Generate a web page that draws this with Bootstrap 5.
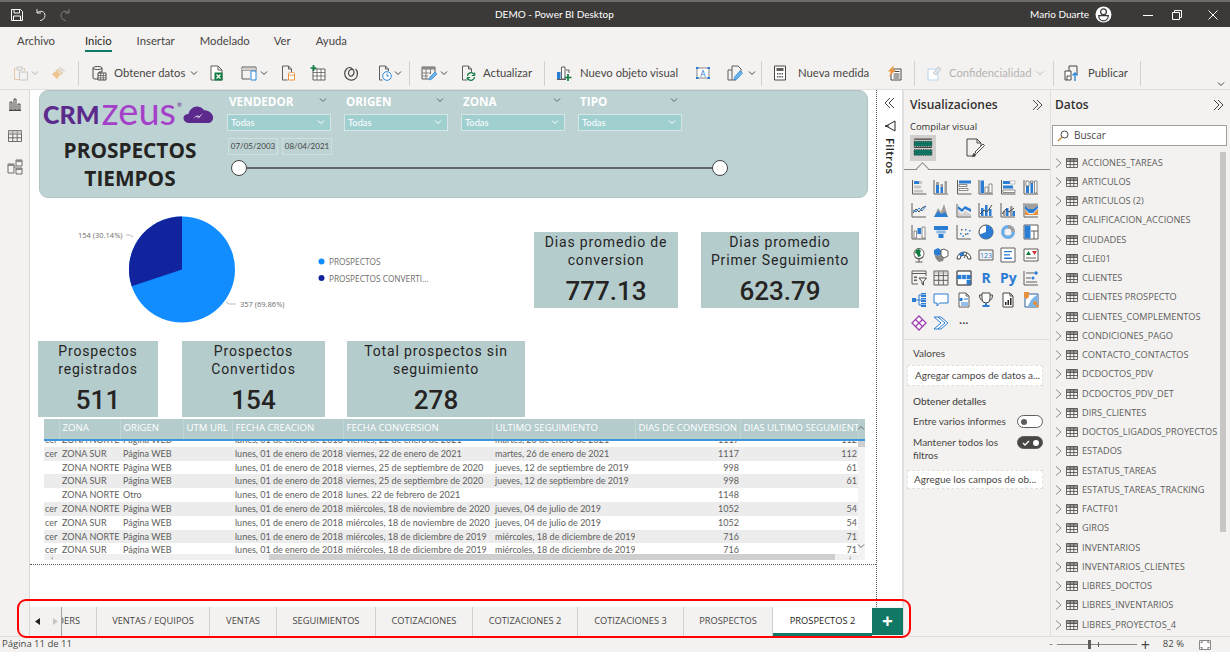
<!DOCTYPE html>
<html lang="es">
<head>
<meta charset="utf-8">
<title>DEMO - Power BI Desktop</title>
<link href="https://cdn.jsdelivr.net/npm/bootstrap@5.3.0/dist/css/bootstrap.min.css" rel="stylesheet">
<style>
:root{--pane:#f3f2f1;--line:#e1dfdd;--tx:#605e5c;--green:#117865;--kpi:#b5cccd;--ui:"Lato","Open Sans",sans-serif;--up:"Open Sans","Noto Sans",sans-serif;}
html,body{height:100%;overflow:hidden;background:#fff;}
body{font-family:var(--ui);background:#fff;color:#323130;font-size:10.5px;width:1230px;height:657px;}
.ic{width:16px;height:16px;flex:none;display:block;}
.ic.s14{width:14px;height:14px;}
.ic.s12{width:12px;height:12px;}
.cv8{width:8px;height:8px;flex:none;display:block;}
/* title bar */
.tbar{height:27px;background:#3b3a39;border-top:2px solid #6d6c6b;color:#fff;font-size:10px;flex:none;}
.tleft{width:495px;padding-left:10px;gap:10px;}
.tbar .spc{flex:1;}
.tava{width:17px;height:17px;flex:none;margin:0 25px 0 6px;}
.wbtn{display:flex;justify-content:center;}
.wmin{width:22px}.wres{width:36px}.wcls{width:35px}
/* ribbon */
.rib{background:var(--pane);flex:none;}
.rtabs{height:31px;padding-left:17px;}
.rtabs .nav-link{color:#484644;font-size:11.3px;padding:0;line-height:24px;height:22px;margin-top:2px;position:relative;}
.rtabs .nav-link.active{color:#252423;}
.rtabs .nav-link.active::after{content:"";position:absolute;left:0;right:0;bottom:-1px;height:2px;background:var(--green);}
.rt2{margin-left:30px;}.rt3{margin-left:25px;}.rt4{margin-left:25px;}.rt5{margin-left:24px;}.rt6{margin-left:25px;}
.tools{height:32px;border-bottom:1px solid var(--line);padding:0 0 1px 13px;font-size:11.3px;color:#484644;}
.tools .vs{width:1px;height:25px;background:#d2d0ce;flex:none;}
.tools .lbl{white-space:nowrap;flex:none;}
.w72{width:72px;}.w49{width:49px;}.w99{width:99px;}.w71{width:71px;}.w83{width:83px;}.w40{width:40px;}
.dis{color:#b5b3b1;}
.sp1{margin-left:1px}.sp2{margin-left:2px}.sp3{margin-left:3px}.sp4{margin-left:4px}.sp5{margin-left:5px}.sp7{margin-left:7px}.sp8{margin-left:8px}.sp9{margin-left:9px}.sp10{margin-left:10px}.sp11{margin-left:11px}.sp12{margin-left:12px}.sp14{margin-left:14px}.sp16{margin-left:16px}.sp17{margin-left:17px}.sp18{margin-left:18px}
.collap{margin-left:auto;margin-right:5px;align-self:flex-end;}
/* main */
.main{height:546px;position:relative;background:var(--pane);flex:none;}
.rail{width:30px;flex:none;gap:15.5px;padding-top:6px;border-right:1px solid #d9d7d5;}
.center{width:873px;flex:none;}
.ctop{height:517px;background:#fff;}
.canvas{width:847px;flex:none;background:#fff;border-right:1px dotted #555;}
.band{margin:0 8px 0 9px;height:108px;background:#bdd2d2;border:1px solid #b0c4c4;border-radius:9px;padding:10px 0 0 3px;gap:9px;flex:none;}
.brand{width:175px;flex:none;}
.logo{height:26px;line-height:26px;white-space:nowrap;}
.logo .crm{font-family:"Lato",sans-serif;font-weight:900;font-size:25px;color:#5b2a8c;}
.logo .zeus{font-family:"Lato",sans-serif;font-weight:400;font-size:38px;color:#a540c8;line-height:24px;margin:-9px 0 0 2px;}
.logo sup{font-size:6px;color:#5b2a8c;top:-1.5em;margin:0 1px;}
.logo svg{flex:none;}
.btit{font-family:var(--up);font-weight:700;font-size:20.8px;line-height:28px;color:#252423;text-align:center;margin-top:9px;width:174px;}
.slic{width:104px;}
.fields{gap:13px;}
.slab{height:19px;padding:0 4px 0 2px;font-family:var(--up);color:#fff;font-weight:700;font-size:11.7px;line-height:13px;justify-content:space-between;margin-top:-6px;}
.slab svg{color:#5a6a6a;margin-top:1px;}
.ssel{height:17px;background:#a0cfd0;border:1px solid #d6e6e6;color:#fff;font-size:9.3px;line-height:14px;padding:1px 5px 0 3px;}
.ssel svg{margin-top:2px;}
.dates{gap:4px;margin:7px 0 0 1px;}
.dbox{width:50px;height:17px;border:1px solid #cfdede;color:#444;font-size:8px;line-height:15px;text-align:center;}
.slider{height:16px;width:500px;margin-top:5px;position:relative;}
.slider .ln{position:absolute;left:10px;right:6px;top:7px;height:2px;background:#666;}
.slider .hd{position:absolute;top:0;width:16px;height:16px;border-radius:50%;background:#fff;border:1.5px solid #444;}
.hd.h1{left:4px}.hd.h2{left:485px}
.r1{height:143px;flex:none;}
.piebox{width:504px;flex:none;display:block;}
.pct{font-size:7.5px;fill:#6f6d6b;font-family:"Open Sans",sans-serif;}
.pleg{font-size:8.3px;fill:#6f6d6b;font-family:"Open Sans",sans-serif;}
.kpi{background:var(--kpi);height:76px;font-family:Roboto,sans-serif;color:#252423;text-align:center;flex:none;}
.kt{font-size:14px;line-height:18px;letter-spacing:.85px;padding-top:1px;}
.kv{font-size:26px;font-weight:500;line-height:34px;margin-top:5px;}
.k144{width:144px}.k158{width:158px;margin-left:23px}.k120{width:120px}.k143{width:143px;margin-left:24px}.k178{width:178px;margin-left:22px}
.ktop{margin-top:34px;}
.r2{padding-left:8px;flex:none;}
.tblw{margin:2px 11px 0 14px;height:145px;position:relative;overflow:hidden;flex:none;}
.ttab{table-layout:fixed;width:814px;margin:0;font-size:9px;white-space:nowrap;}
.ttab th,.ttab td{padding:0 0 0 3px;border:0;overflow:hidden;box-shadow:none;background:transparent;color:var(--tx);}
.ttab th{height:20px;background:var(--kpi);color:#fff;font-family:var(--up);font-weight:400;font-size:9.6px;border-right:1px solid #c2d6d6;vertical-align:top;padding-top:2px;line-height:13px;}
.hrow{border-bottom:2px solid #3b96dd;width:821px;background:var(--kpi);height:22px;overflow:hidden;}
.tbody{height:113px;width:814px;overflow:hidden;}
.tbody .ttab{margin-top:-8px;}
.ttab td{height:13.8px;line-height:13px;}
.ttab td:first-child{padding-left:1px;}
.ttab tr.gy td{background:#ececec;}
.ttab td.ar{text-align:right;padding:0 1px 0 0;}
.c1{width:15px}.c2{width:61px}.c3{width:63px}.c4{width:49px}.c5{width:111px}.c6{width:149px}.c7{width:143px}.c8{width:105px}.c9{width:118px}
.vbar{position:absolute;right:0;top:22px;width:7px;height:119px;background:#f3f3f3;}
.vbar i{display:block;height:6px;background:#cfcfcf;}
.vup,.vdn{position:absolute;right:0;color:#666;}
.vup{top:5px}.vdn{top:123px}
.hbar{height:6px;width:814px;background:#f0f0f0;position:relative;}
.hbar i{position:absolute;left:225px;width:566px;top:0;bottom:0;background:#cfcfcf;}
.hl,.hr{position:absolute;top:0;font-size:8px;line-height:6px;color:#555;}
.hl{left:7px}.hr{left:805px}
.cbot{height:1px;border-bottom:1px dotted #555;flex:none;}
/* filter rail */
.filt{width:26px;flex:none;background:#fff;gap:8px;padding-top:7px;border-right:1px solid var(--line);}
.filt .fun{margin-top:3px;}
.filt .vt{writing-mode:vertical-rl;font-family:var(--up);font-weight:600;font-size:11.4px;color:#252423;line-height:12px;letter-spacing:.3px;margin-top:-2px;}
/* tabs */
.ptabs{height:29px;flex:none;background:var(--pane);flex-wrap:nowrap;font-family:var(--up);font-size:9.3px;color:#484644;}
.ptabs .nav-link{color:#484644;padding:0;height:29px;line-height:28px;text-align:center;border-right:1px solid #d2d0ce;white-space:nowrap;border-radius:0;}
.ptabs .nav-link.active{background:#fff;color:#252423;border-right:0;border-bottom:3px solid var(--green);font-weight:500;}
.pnav{width:32px;flex:none;border-right:1px solid #a19f9d;padding-left:5px;gap:13px;}
.t35{width:35px;}
.ptabs .nav-link.clipd{display:flex;justify-content:flex-end;overflow:hidden;padding-right:16px;}
.t113{width:113px}.t67{width:67px}.t99{width:99px}.t97{width:97px}.t105{width:105px}.t106{width:106px}.t89{width:89px}
.padd{width:31px;background:var(--green);color:#fff;font-size:19px;font-weight:700;line-height:27px;text-align:center;height:27px;margin-top:1px;}
.redbox{position:absolute;left:17px;top:509px;width:894px;height:39px;border:2.5px solid #f00;border-radius:9px;pointer-events:none;}
/* viz pane */
.viz{width:147px;flex:none;border-left:1px solid var(--line);padding:6px 0 0 0;}
.phead{font-family:var(--up);font-size:12px;font-weight:600;color:#323130;line-height:17px;}
.vh{padding:0 7px 0 6px;justify-content:space-between;}
.vsub{font-family:var(--up);font-size:9.4px;font-weight:500;padding:7px 0 0 6px;line-height:14px;color:#323130;}
.vbtns{padding-left:6px;margin-top:1px;height:26px;}
.vsel{width:26px;height:26px;background:#d2d0ce;display:flex;align-items:center;justify-content:center;}
.vsel svg{width:20px;height:20px;}
.vtab2{margin-left:28px;display:flex;align-items:center;}
.notch{height:9px;border-bottom:1px solid #8a8886;position:relative;}
.notch::after{content:"";position:absolute;left:14px;bottom:-4px;width:9px;height:9px;background:var(--pane);border-left:1px solid #8a8886;border-top:1px solid #8a8886;transform:rotate(45deg);}
.vgrid{display:grid;grid-template-columns:repeat(6,22.3px);grid-auto-rows:22.6px;padding:6px 0 0 4px;justify-items:center;align-items:center;}
.vgrid .rr{font-weight:700;font-size:14px;line-height:16px;color:#2b7cd3;font-family:"Open Sans",sans-serif;}
.vgrid .dots{font-size:12px;line-height:8px;color:#444;}
.vsec{border-top:1px solid var(--line);margin-top:5px;padding-top:6px;font-size:10px;color:#484644;}
.vlab{padding-left:9px;line-height:14px;}
.vbox{margin:5px 7px 0 3px;height:21px;background:#fff;border:1px dashed #e1dfdd;padding-left:7px;line-height:19px;color:#484644;white-space:nowrap;overflow:hidden;}
.vlab.mt8{margin-top:8px;font-weight:500;}
.trow{padding:7px 7px 0 9px;justify-content:space-between;line-height:13px;}
.trow.t2{padding-top:8px;}
.trow .wr{width:92px;}
.togl{width:26px;height:13px;border:1px solid #605e5c;border-radius:7px;background:#fff;position:relative;flex:none;}
.togl::after{content:"";position:absolute;left:3px;top:2.5px;width:6px;height:6px;border-radius:50%;background:#605e5c;}
.togl.on{background:#484644;}
.togl.on::after{left:auto;right:3px;background:#fff;}
.togl svg{position:absolute;left:4px;top:1.500px;}
.vbox.b2{height:19px;line-height:17px;margin-top:8px;padding-left:6px;}
/* data pane */
.data{width:180px;flex:none;border-left:1px solid var(--line);padding:6px 0 0 0;position:relative;}
.dh{padding:0 6px 0 4px;justify-content:space-between;}
.dsearch{margin:12px 3px 0 1px;height:21px;background:#fff;border:1px solid #a19f9d;padding:0 4px;gap:5px;font-family:var(--up);font-size:10px;color:#484644;}
.dlist{margin-top:7px;}
.dlist .list-group-item{background:transparent;border:0;padding:0 0 0 4px;height:19.25px;color:var(--tx);font-family:var(--up);font-size:9.2px;display:flex;align-items:center;gap:4px;white-space:nowrap;}
.dlist svg{flex:none;}
.dscroll{position:absolute;right:4px;top:62px;width:6px;height:380px;background:#c8c6c4;}
/* status */
.stat{height:16px;border-top:1px solid var(--line);background:var(--pane);font-family:var(--up);font-size:9.5px;color:#484644;padding:0 0 0 2px;flex:none;}
.zoomz{margin-left:auto;padding-right:18px;}
.ztrack{width:80px;height:1px;background:#8a8886;position:relative;margin:0 4px;}
.ztrack::before{content:"";position:absolute;left:31px;top:-4px;width:3px;height:9px;background:#605e5c;}
.ztrack::after{content:"";position:absolute;left:41px;top:-2px;width:1px;height:5px;background:#605e5c;}
.zpct{margin:0 14px 0 13px;}
</style>
</head>
<body class="d-flex flex-column">
<svg width="0" height="0" class="position-absolute">
<defs>
<symbol id="chev" viewBox="0 0 8 8"><path d="M1 2.500l3 3 3-3" fill="none" stroke="currentColor" stroke-width="1"/></symbol>
<symbol id="chevu" viewBox="0 0 8 8"><path d="M1 5.500l3-3 3 3" fill="none" stroke="currentColor" stroke-width="1"/></symbol>
<symbol id="clip" viewBox="0 0 16 16"><path d="M3 3.500H1.500v11H6M10 3.500h1.500V6" fill="none" stroke="#e8c9a8"/><path d="M4 2h5v3H4z" fill="none" stroke="#c8c6c4"/><path d="M6.500 7h8v8h-8z" fill="none" stroke="#c8c6c4"/></symbol>
<symbol id="paint" viewBox="0 0 16 16"><path d="M9 2l5 4-1 1-5-4z" fill="#d2d0ce"/><path d="M7.500 4l4 4-2.500 2L5 6z" fill="#f2d8b8" stroke="#d2b48c" stroke-width=".7"/><path d="M5 6l4 4-3 4-5-5z" fill="#f0c48c"/></symbol>
<symbol id="db" viewBox="0 0 16 16"><path d="M2 3c0-2 9-2 9 0v4H8v7H4c-2 0-2-1-2-1z" fill="none" stroke="#484644"/><path d="M2 3c0 2 9 2 9 0" fill="none" stroke="#484644"/><path d="M7 8h8v7H7z" fill="#fff" stroke="#484644"/><path d="M7 10.500h8M7 12.800h8M9.700 8v7M12.300 8v7" stroke="#484644" stroke-width=".7"/></symbol>
<symbol id="xl" viewBox="0 0 16 16"><path d="M2 1h7l4 4v10H2z" fill="#fff" stroke="#605e5c"/><path d="M9 1v4h4" fill="none" stroke="#605e5c"/><path d="M5.500 7.500h8v8h-8z" fill="#107c41"/><path d="M7.500 9.500l4 4M11.500 9.500l-4 4" stroke="#fff" stroke-width="1.200"/></symbol>
<symbol id="tb" viewBox="0 0 16 16"><path d="M1 2h14v4M1 2v12h8" fill="none" stroke="#605e5c"/><path d="M1 5h14" stroke="#605e5c"/><path d="M1 3h14v2H1z" fill="#d2d0ce"/><path d="M10 6h5v9h-5z" fill="#fff" stroke="#2b88d8"/></symbol>
<symbol id="paper" viewBox="0 0 16 16"><path d="M2.500 1h6l3 3v3M2.500 1v14h5" fill="none" stroke="#605e5c"/><path d="M8.500 1v3h3" fill="none" stroke="#605e5c"/><path d="M8.500 8.500c0-1.600 6-1.600 6 0V15h-6z" fill="#fff" stroke="#e8903a"/><path d="M8.500 9.500c0 1 6 1 6 0" fill="none" stroke="#e8903a"/></symbol>
<symbol id="tplus" viewBox="0 0 16 16"><path d="M3 4h12v11H3z" fill="#fff" stroke="#605e5c"/><path d="M3 7.500h12M3 11h12M7 4v11M11 4v11" stroke="#605e5c" stroke-width=".8"/><path d="M3.500 0v6M.5 3h6" stroke="#107c41" stroke-width="1.700"/></symbol>
<symbol id="at" viewBox="0 0 16 16"><path d="M10.500 5c-2-1.500-5 0-5 3s2.500 4 4 2.500 2-4 .5-6S6 1.500 3.500 4 1 11 4 13.500s7 2 9-.5 2-7-.5-9" fill="none" stroke="#484644" stroke-width="1.200"/></symbol>
<symbol id="clock" viewBox="0 0 16 16"><path d="M2.500 1h6l3 3v2M2.500 1v14h3" fill="none" stroke="#605e5c"/><path d="M8.500 1v3h3" fill="none" stroke="#605e5c"/><circle cx="10" cy="11" r="4.300" fill="#fff" stroke="#2b88d8"/><path d="M10 8.500V11h2" fill="none" stroke="#2b88d8"/></symbol>
<symbol id="gridp" viewBox="0 0 16 16"><path d="M1 2h13v6M1 2v12h7" fill="none" stroke="#605e5c"/><path d="M1 2h13v2.500H1z" fill="#8a8886"/><path d="M1 8h9M1 11h6M5 4v10M9.500 4v5" stroke="#605e5c" stroke-width=".7"/><path d="M8 15l1-3 5-5 2 2-5 5z" fill="#6db3e8" stroke="#2b88d8" stroke-width=".7"/></symbol>
<symbol id="docr" viewBox="0 0 16 16"><path d="M2.500 1h6l3 3v3M2.500 1v14h4" fill="none" stroke="#605e5c"/><path d="M8.500 1v3h3" fill="none" stroke="#605e5c"/><path d="M7.500 11a3.500 3.500 0 016-2.200l1 1M14.500 12a3.500 3.500 0 01-6 2.200l-1-1" fill="none" stroke="#107c41" stroke-width="1.300"/><path d="M14.800 7.500v3h-3M7.200 15.500v-3h3" fill="none" stroke="#107c41" stroke-width="1"/></symbol>
<symbol id="newv" viewBox="0 0 16 16"><path d="M1 7h3.500v7H1z" fill="#2b7cd3"/><path d="M5.500 2H9v12H5.500z" fill="#fff" stroke="#605e5c"/><path d="M1 14.500h9" stroke="#605e5c"/><path d="M10 5h3v3" fill="none" stroke="#605e5c"/><path d="M12 9v7M8.500 12.500h7" stroke="#107c41" stroke-width="1.700"/></symbol>
<symbol id="tbox" viewBox="0 0 16 16"><path d="M2 3h12v10H2z" fill="#fff" stroke="#8a8886"/><path d="M1 2h2.500v2H1zM12.500 2H15v2h-2.500zM1 12h2.500v2H1zM12.500 12H15v2h-2.500z" fill="#2b7cd3"/><text x="8" y="11.500" font-size="8.500" text-anchor="middle" fill="#2b7cd3" font-family="Open Sans,sans-serif">A</text></symbol>
<symbol id="docp" viewBox="0 0 16 16"><path d="M5 5V1h6l3 3v4M5 5H1v10h8" fill="none" stroke="#605e5c"/><path d="M5 5v10" stroke="#605e5c"/><path d="M7 15l1-3.500 5-5.500 2.500 2L10 14z" fill="#6db3e8" stroke="#2b88d8" stroke-width=".8"/></symbol>
<symbol id="calc" viewBox="0 0 16 16"><path d="M2.500 1h11v14h-11z" fill="#fff" stroke="#484644"/><path d="M4.500 3h7v3h-7z" fill="#605e5c"/><path d="M5 8h1.500v1.500H5zM7.300 8h1.500v1.500H7.300zM9.600 8h1.500v1.500H9.600zM5 11h1.500v1.500H5zM7.300 11h1.500v1.500H7.300zM9.600 11h1.500v1.500H9.600z" fill="#605e5c"/></symbol>
<symbol id="bolt" viewBox="0 0 16 16"><path d="M7 4h8v11H5V9" fill="#fff" stroke="#484644"/><path d="M8.500 6.500h5M7.500 9h6M7.500 11h6M7.500 13h6" stroke="#484644" stroke-width="1"/><path d="M8 0L2 6.500h3L3 12l7-7.500H6.500z" fill="#e8903a"/></symbol>
<symbol id="conf" viewBox="0 0 16 16"><path d="M2 4h7l3 3v8H2z" fill="#fff" stroke="#b7d5ee"/><path d="M7 8l5-6 3 2-5 6z" fill="#dce6ee" stroke="#b7b5b3" stroke-width=".6"/></symbol>
<symbol id="pub" viewBox="0 0 16 16"><path d="M5 6V1h8v9" fill="none" stroke="#484644"/><path d="M1 6h6v9H1z" fill="#fff" stroke="#484644"/><path d="M3 15v-4h3" fill="none" stroke="#484644"/><path d="M11 16V8M8.500 10.500L11 8l2.500 2.500" fill="none" stroke="#2b88d8" stroke-width="1.400"/></symbol>
<symbol id="rep" viewBox="0 0 16 16"><path d="M3 6h2v8H3zM7 3h2v11H7zM11 8h2v6h-2z" fill="none" stroke="#484644"/><path d="M2 14.500h12" stroke="#484644"/></symbol>
<symbol id="gridi" viewBox="0 0 16 16"><path d="M1.500 2.500h13v11h-13zM1.500 6h13M1.500 9.800h13M5.800 2.500v11M10.200 2.500v11" fill="none" stroke="#605e5c" stroke-width=".9"/><path d="M1.500 2.500h13V6h-13z" fill="#b5b3b1" fill-opacity=".6"/></symbol>
<symbol id="model" viewBox="0 0 16 16"><path d="M1 5h6v9H1zM9 1h6v6H9zM9 9h6v6H9zM7 8h2" fill="none" stroke="#605e5c" stroke-width=".9"/><path d="M1 5h6v2H1zM9 1h6v2H9zM9 9h6v2H9z" fill="#8a8886"/></symbol>
<symbol id="v1" viewBox="0 0 16 16"><path d="M1.500 1v14h14" fill="none" stroke="#605e5c"/><path d="M3 2h5v3H3z" fill="#2b7cd3"/><path d="M8 2h3v3H8zM3 6.500h7v3H3zM3 11h9v2.500H3z" fill="#c8c6c4"/></symbol>
<symbol id="v2" viewBox="0 0 16 16"><path d="M1 1v14h14" fill="none" stroke="#605e5c"/><path d="M3 6h3v8H3zM7.500 8H10v6H7.500z" fill="#2b7cd3"/><path d="M3 3h3v3H3zM7.500 5H10v3H7.500zM11.500 2H14v12h-2.500z" fill="#a19f9d"/></symbol>
<symbol id="v3" viewBox="0 0 16 16"><path d="M1.500 1v14h14" fill="none" stroke="#605e5c"/><path d="M3 1.500h12v3H3z" fill="#2b7cd3"/><path d="M3 5.500h8v2H3zM3 9.500h9v2H3z" fill="#fff" stroke="#605e5c" stroke-width=".7"/></symbol>
<symbol id="v4" viewBox="0 0 16 16"><path d="M1 1v14h14" fill="none" stroke="#605e5c"/><path d="M2.500 1.500h3.500V14H2.500z" fill="#2b7cd3"/><path d="M7 8h3v6H7zM11 5h3v9h-3z" fill="#fff" stroke="#605e5c" stroke-width=".7"/></symbol>
<symbol id="v5" viewBox="0 0 16 16"><path d="M1.500 1v14h14" fill="none" stroke="#605e5c"/><path d="M3 2h7v3H3z" fill="#2b7cd3"/><path d="M10 2h5v3h-5z" fill="#fff" stroke="#a19f9d" stroke-width=".6"/><path d="M3 6.500h10v3H3z" fill="#2b7cd3"/><path d="M3 11h12v2.500H3z" fill="#fff" stroke="#605e5c" stroke-width=".7"/></symbol>
<symbol id="v6" viewBox="0 0 16 16"><path d="M1 1v14h14" fill="none" stroke="#605e5c"/><path d="M3 7h3v7H3zM7.500 4H10v10H7.500z" fill="#2b7cd3"/><path d="M3 2h3v5H3zM7.500 2H10v2H7.500zM11.500 2H14v12h-2.500z" fill="#fff" stroke="#605e5c" stroke-width=".7"/></symbol>
<symbol id="v7" viewBox="0 0 16 16"><path d="M1 1v14h14" fill="none" stroke="#605e5c"/><path d="M2 11l3-4 3 3 3-4 4-2" fill="none" stroke="#484644"/><path d="M2 8l3 2 3-4 3 3 4-5" fill="none" stroke="#2b7cd3"/></symbol>
<symbol id="v8" viewBox="0 0 16 16"><path d="M1 15L5 6l3 4 3-8 4 13z" fill="#a19f9d"/><path d="M1 15l4-6 3 3 4-2 3 5z" fill="#2b7cd3"/></symbol>
<symbol id="v9" viewBox="0 0 16 16"><path d="M1 2v13h14" fill="none" stroke="#605e5c"/><path d="M2 4l4 3 3-3 6 3v3l-6-3-3 3-4-3z" fill="#2b7cd3"/><path d="M2 9l4 3 3-3 6 3v2H2z" fill="#d2d0ce"/></symbol>
<symbol id="v10" viewBox="0 0 16 16"><path d="M1 1v14h14" fill="none" stroke="#605e5c"/><path d="M3 6h2.500v8H3zM7 3h2.500v11H7zM11 7h2.500v7H11z" fill="#2b7cd3"/><path d="M2 12l4-4 3 2 5-7" fill="none" stroke="#484644"/></symbol>
<symbol id="v11" viewBox="0 0 16 16"><path d="M1 1v14h14" fill="none" stroke="#605e5c"/><path d="M3 9h2.500v5H3zM10 4h2.500v10H10z" fill="#a19f9d"/><path d="M6 6h2.500v8H6zM12.500 9H15v5h-2.500z" fill="#2b7cd3"/><path d="M2 12l4-5 3 3 5-4" fill="none" stroke="#484644"/></symbol>
<symbol id="v12" viewBox="0 0 16 16"><path d="M1 1v14h14" fill="none" stroke="#605e5c"/><path d="M2 3l4 4h4l5-4v3l-5 5H6L2 7z" fill="#2b7cd3"/><path d="M2 8l4 4h4l5-5v6H2z" fill="#e8903a"/><path d="M2 1.500h13V4L10 7H6L2 4z" fill="#a19f9d"/></symbol>
<symbol id="v13" viewBox="0 0 16 16"><path d="M1 1v14h14" fill="none" stroke="#605e5c"/><path d="M3 7h2.500v7H3z" fill="#fff" stroke="#605e5c" stroke-width=".7"/><path d="M6.500 4H10v6H6.500z" fill="#2b7cd3"/><path d="M11 3h3v11h-3z" fill="#fff" stroke="#605e5c" stroke-width=".7"/></symbol>
<symbol id="v14" viewBox="0 0 16 16"><path d="M1 2h14v4H1z" fill="#2b7cd3"/><path d="M3.500 6.500h9v3h-9z" fill="#8ab8e0"/><path d="M5.500 10h5v4h-5z" fill="#2b7cd3"/></symbol>
<symbol id="v15" viewBox="0 0 16 16"><path d="M1 1v14h14" fill="none" stroke="#605e5c"/><path d="M4 9h1.500v1.500H4zM6.500 11.500H8V13H6.500zM9 5h1.500v1.500H9zM11 9h1.500v1.500H11zM13 6h1.500v1.500H13z" fill="#2b7cd3"/><path d="M5 5h1.500v1.500H5zM9 9.500h1.500V11H9z" fill="#605e5c"/></symbol>
<symbol id="v16" viewBox="0 0 16 16"><circle cx="8" cy="8" r="7" fill="#fff" stroke="#484644"/><path d="M8 1a7 7 0 11-6.500 9.500L8 8z" fill="#2b7cd3"/></symbol>
<symbol id="v17" viewBox="0 0 16 16"><circle cx="8" cy="8" r="5.300" fill="none" stroke="#6daee6" stroke-width="3.400"/><path d="M8 2.700A5.300 5.300 0 0113.300 8" fill="none" stroke="#a19f9d" stroke-width="3.400"/></symbol>
<symbol id="v18" viewBox="0 0 16 16"><path d="M1 1h14v14H1z" fill="#fff" stroke="#605e5c"/><path d="M1.500 1.500h6v13h-6z" fill="#2b7cd3"/><path d="M8 7h7M11 7v8" stroke="#605e5c"/></symbol>
<symbol id="v19" viewBox="0 0 16 16"><circle cx="8" cy="6.500" r="5" fill="#fff" stroke="#605e5c"/><path d="M5 3l3-1 2 2-1 2 1 3-3 1-1-3-2-1z" fill="#107c41"/><path d="M12.500 10a6 6 0 01-9 0M8 12v3M4.500 15h7" fill="none" stroke="#605e5c"/></symbol>
<symbol id="v20" viewBox="0 0 16 16"><path d="M1 3l4-2 3 2v5l-4 1-3-2z" fill="#2b7cd3"/><path d="M8 3l3-1 4 2v5l-4 2-3-3z" fill="#fff" stroke="#605e5c"/><path d="M1 7l3 2 4-1 3 3-1 3-4 1-3-3z" fill="#8a8886"/></symbol>
<symbol id="v21" viewBox="0 0 16 16"><path d="M1 12a7 7 0 0114 0h-3a4 4 0 00-8 0z" fill="#fff" stroke="#484644"/><path d="M3 7.500A7 7 0 018 5v3a4 4 0 00-3.200 1.700z" fill="#2b7cd3"/><path d="M8 11l3-5" stroke="#484644"/></symbol>
<symbol id="v22" viewBox="0 0 16 16"><path d="M1 3h14v10H1z" fill="#f3f2f1" stroke="#605e5c"/><text x="8" y="10.700" font-size="7" text-anchor="middle" fill="#2b7cd3" font-family="Open Sans,sans-serif">123</text></symbol>
<symbol id="v23" viewBox="0 0 16 16"><path d="M1 1h14v14H1z" fill="#fff" stroke="#605e5c"/><path d="M4 4h8v1.300H4zM4 7.300h6v1.300H4zM4 10.600h8v1.300H4z" fill="#2b7cd3"/></symbol>
<symbol id="v24" viewBox="0 0 16 16"><path d="M1 2h14v12H1z" fill="#fff" stroke="#605e5c"/><path d="M3 8l2.500-4L8 8z" fill="#107c41"/><path d="M9 4h5l-2.500 4z" fill="#d13438"/><path d="M3 10.500h10v1H3z" fill="#605e5c"/></symbol>
<symbol id="v25" viewBox="0 0 16 16"><path d="M1 1h14v5M1 1v13h6" fill="none" stroke="#605e5c"/><path d="M1 3.500h14" stroke="#605e5c"/><path d="M3 6.500h3v1.500H3zM3 9.500h3V11H3z" fill="#605e5c"/><path d="M8 8h7.500l-3 3.500V15l-1.500-1v-2.500z" fill="#fff" stroke="#484644"/></symbol>
<symbol id="v26" viewBox="0 0 16 16"><path d="M1 1h14v14H1zM1 5.600h14M1 10.300h14M5.700 1v14M10.300 1v14" fill="none" stroke="#605e5c"/><path d="M1 1h14v3H1z" fill="#a19f9d" fill-opacity=".4"/></symbol>
<symbol id="v27" viewBox="0 0 16 16"><path d="M1 1h14v14H1z" fill="#fff" stroke="#605e5c"/><path d="M1 4.500h14V15H10V9.500H1z" fill="#2b7cd3"/><path d="M1 9.500h14M5.700 1v14M10.300 1v14M1 4.500h14" fill="none" stroke="#fff" stroke-width=".7"/><path d="M1 1h14v14H1z" fill="none" stroke="#605e5c"/></symbol>
<symbol id="v30" viewBox="0 0 16 16"><path d="M1 1v14h14" fill="none" stroke="#605e5c"/><path d="M3 3h8M3 8h5M3 12h11" stroke="#605e5c"/><circle cx="13" cy="3" r="1.800" fill="#2b7cd3"/><circle cx="10" cy="8" r="1.500" fill="#2b7cd3"/></symbol>
<symbol id="v31" viewBox="0 0 16 16"><path d="M1 6h4v4H1z" fill="#2b7cd3"/><path d="M5 8h3M8 3v10M8 3h2M8 8h2M8 13h2" fill="none" stroke="#2b7cd3"/><path d="M10 1h5v4h-5zM10 6h5v4h-5zM10 11h5v4h-5z" fill="#2b7cd3"/><path d="M10 2.500h5M10 7.500h5M10 12.500h5" stroke="#fff" stroke-width=".5"/></symbol>
<symbol id="v32" viewBox="0 0 16 16"><path d="M1 2h14v9H6.500L4 14v-3H1z" fill="#fff" stroke="#2b7cd3"/></symbol>
<symbol id="v33" viewBox="0 0 16 16"><path d="M3 1h7l3 3v11H3z" fill="#fff" stroke="#605e5c"/><path d="M10 1v3h3" fill="none" stroke="#605e5c"/><circle cx="5" cy="7.500" r="1.800" fill="#2b7cd3"/><path d="M8 7h4M5 11h7M5 13h7" stroke="#2b7cd3"/></symbol>
<symbol id="v34" viewBox="0 0 16 16"><path d="M4 1h8v6a4 4 0 01-8 0z" fill="#fff" stroke="#484644"/><path d="M4 3H1.500c0 3 1 5 3 5.500M12 3h2.500c0 3-1 5-3 5.500" fill="none" stroke="#484644"/><path d="M7 11h2v2H7z" fill="#2b7cd3"/><path d="M4.500 13h7v2h-7z" fill="#2b7cd3"/></symbol>
<symbol id="v35" viewBox="0 0 16 16"><path d="M3 1h7l3 3v11H3z" fill="#fff" stroke="#484644"/><path d="M10 1v3h3" fill="none" stroke="#484644"/><path d="M5 10h1.500v3H5zM7.500 8H9v5H7.500zM10 6h1.500v7H10z" fill="#252423"/></symbol>
<symbol id="v36" viewBox="0 0 16 16"><path d="M2 2h13v13H2z" fill="#fff" stroke="#2b5f9e"/><path d="M5 14l3-6 3-3 3-2v11z" fill="#78b5e8"/><path d="M1 0h5v5L3.500 7 1 5z" fill="#e8903a"/><circle cx="12" cy="11" r="2" fill="#e8903a"/><circle cx="14.500" cy="14" r="1.400" fill="#e8903a"/></symbol>
<symbol id="v37" viewBox="0 0 16 16"><path d="M8 1l7 7-7 7-7-7z" fill="#fff" stroke="#9c3fb0" stroke-width="1.300"/><path d="M4.500 4.500l7 7M11.500 4.500l-7 7" stroke="#9c3fb0" stroke-width="1.300"/></symbol>
<symbol id="v38" viewBox="0 0 16 16"><path d="M1 2h7l7 6-7 6H1l7-6z" fill="#fff" stroke="#2b7cd3"/><path d="M5 2l7 6-7 6" fill="none" stroke="#2b7cd3"/></symbol>
<symbol id="brush" viewBox="0 0 22 22"><path d="M3 2h10l4 4v3M3 2v17h8" fill="none" stroke="#484644"/><path d="M13 2v4h4" fill="none" stroke="#484644"/><path d="M11 15l8-8 1.500 1.500-8 8z" fill="#fff" stroke="#484644"/><path d="M8 20c3 0 4-1 4-3l-2-1c-2 1-1 3-2 4z" fill="#484644"/></symbol>
<symbol id="dbl" viewBox="0 0 12 12"><path d="M2 1l5 5-5 5M6 1l5 5-5 5" fill="none" stroke="#484644" stroke-width="1"/></symbol>
<symbol id="dbll" viewBox="0 0 12 12"><path d="M10 1L5 6l5 5M6 1L1 6l5 5" fill="none" stroke="#484644" stroke-width="1"/></symbol>
<symbol id="right" viewBox="0 0 7 12"><path d="M1 1.500L6 6l-5 4.500" fill="none" stroke="#8a8886"/></symbol>
<symbol id="tabi" viewBox="0 0 12 10"><path d="M.5.500h11v9H.5zM.5 3.500h11M.5 6.500h11M4.200.5v9M7.800.5v9" fill="none" stroke="#484644" stroke-width=".8"/><path d="M.5.500h11v3H.5z" fill="#484644" fill-opacity=".55"/></symbol>
</defs>
</svg>

<header class="tbar d-flex align-items-center">
  <div class="tleft d-flex align-items-center">
    <svg class="ic s14" viewBox="0 0 14 14"><path d="M1.500 1.500h9l2 2v9h-11zM4 1.500V5h5.500V1.500M3.500 12.500V8h7v4.500" fill="none" stroke="#fff"/></svg>
    <svg class="ic s14" viewBox="0 0 14 14"><path d="M3 1v4h4M3 5c3-3 8-2 8 2.500 0 3-2.500 5-5 5" fill="none" stroke="#e8e8e8"/></svg>
    <svg class="ic s14" viewBox="0 0 14 14"><path d="M11 1v4H7M11 5C8 2 3 3 3 7.500c0 3 2.500 5 5 5" fill="none" stroke="#7f7e7d"/></svg>
  </div>
  <div>DEMO - Power BI Desktop</div>
  <div class="spc"></div>
  <div>Mario Duarte</div>
  <svg class="tava" viewBox="0 0 16 16"><circle cx="8" cy="8" r="7.500" fill="#fff"/><circle cx="8" cy="5.500" r="2.700" fill="none" stroke="#3b3a39" stroke-width="1.200"/><path d="M3.500 9h9c0 3.500-2.500 5-4.500 5s-4.500-1.500-4.500-5z" fill="none" stroke="#3b3a39" stroke-width="1.200"/></svg>
  <div class="wbtn wmin"><svg class="ic s12" viewBox="0 0 12 12"><path d="M1 6.500h10" stroke="#fff"/></svg></div>
  <div class="wbtn wres"><svg class="ic s12" viewBox="0 0 12 12"><path d="M1.500 3.500h7v7h-7zM3.500 3.500v-2h7v7h-2" fill="none" stroke="#fff"/></svg></div>
  <div class="wbtn wcls"><svg class="ic s12" viewBox="0 0 12 12"><path d="M1.500 1.500l9 9M10.500 1.500l-9 9" stroke="#fff"/></svg></div>
</header>

<div class="rib">
<ul class="nav rtabs">
  <li class="nav-item"><a class="nav-link" href="#">Archivo</a></li>
  <li class="nav-item rt2"><a class="nav-link active" href="#">Inicio</a></li>
  <li class="nav-item rt3"><a class="nav-link" href="#">Insertar</a></li>
  <li class="nav-item rt4"><a class="nav-link" href="#">Modelado</a></li>
  <li class="nav-item rt5"><a class="nav-link" href="#">Ver</a></li>
  <li class="nav-item rt6"><a class="nav-link" href="#">Ayuda</a></li>
</ul>
<div class="tools d-flex align-items-center">
  <svg class="ic"><use href="#clip"/></svg>
  <svg class="cv8 sp2 dis"><use href="#chev"/></svg>
  <svg class="ic sp12"><use href="#paint"/></svg>
  <span class="vs sp11"></span>
  <svg class="ic sp12"><use href="#db"/></svg>
  <span class="lbl w72 sp7">Obtener datos</span>
  <svg class="cv8 sp4"><use href="#chev"/></svg>
  <svg class="ic sp11"><use href="#xl"/></svg>
  <svg class="ic sp16"><use href="#tb"/></svg>
  <svg class="cv8 sp3"><use href="#chev"/></svg>
  <svg class="ic sp12"><use href="#paper"/></svg>
  <svg class="ic sp14"><use href="#tplus"/></svg>
  <svg class="ic sp17"><use href="#at"/></svg>
  <svg class="ic sp18"><use href="#clock"/></svg>
  <svg class="cv8 sp1"><use href="#chev"/></svg>
  <span class="vs sp7"></span>
  <svg class="ic sp11"><use href="#gridp"/></svg>
  <svg class="cv8 sp3"><use href="#chev"/></svg>
  <svg class="ic sp12"><use href="#docr"/></svg>
  <span class="lbl w49 sp7">Actualizar</span>
  <span class="vs sp12"></span>
  <svg class="ic sp11"><use href="#newv"/></svg>
  <span class="lbl w99 sp8">Nuevo objeto visual</span>
  <svg class="ic sp16"><use href="#tbox"/></svg>
  <svg class="ic sp16"><use href="#docp"/></svg>
  <svg class="cv8 sp5"><use href="#chev"/></svg>
  <span class="vs sp5"></span>
  <svg class="ic sp10"><use href="#calc"/></svg>
  <span class="lbl w71 sp10">Nueva medida</span>
  <svg class="ic sp17"><use href="#bolt"/></svg>
  <span class="vs sp12"></span>
  <svg class="ic sp11"><use href="#conf"/></svg>
  <span class="lbl w83 sp7 dis">Confidencialidad</span>
  <svg class="cv8 sp4 dis"><use href="#chev"/></svg>
  <span class="vs sp9"></span>
  <svg class="ic sp10"><use href="#pub"/></svg>
  <span class="lbl w40 sp8">Publicar</span>
  <span class="vs sp12"></span>
  <svg class="cv8 collap"><use href="#chev"/></svg>
</div>
</div>

<div class="main d-flex">
  <nav class="rail d-flex flex-column align-items-center">
    <svg class="ic"><use href="#rep"/></svg>
    <svg class="ic"><use href="#gridi"/></svg>
    <svg class="ic"><use href="#model"/></svg>
  </nav>

  <div class="center d-flex flex-column">
    <div class="ctop d-flex">
      <section class="canvas d-flex flex-column">
        <div class="band d-flex">
          <div class="brand">
            <div class="logo d-flex align-items-center">
              <span class="crm">CRM</span><span class="zeus">zeus</span><sup>®</sup>
              <svg width="31" height="20" viewBox="0 0 34 22"><path d="M7 21c-4 0-6.500-2.500-6.500-5.500S3 11 6 11c1-5 6-9 11-8 3 .5 5 2 6 4 5 0 9 3 10 7 .5 4-2 7-6 7z" fill="#5b2a8c"/><path d="M11 16l5-4v3l6-5-5 6v-3z" fill="#fff"/></svg>
            </div>
            <div class="btit">PROSPECTOS<br>TIEMPOS</div>
          </div>
          <div class="ctrls">
            <div class="fields d-flex">
              <div class="slic"><div class="slab d-flex">VENDEDOR<svg class="cv8"><use href="#chev"/></svg></div><div class="ssel d-flex justify-content-between">Todas<svg class="cv8 text-white"><use href="#chev"/></svg></div></div>
              <div class="slic"><div class="slab d-flex">ORIGEN<svg class="cv8"><use href="#chev"/></svg></div><div class="ssel d-flex justify-content-between">Todas<svg class="cv8 text-white"><use href="#chev"/></svg></div></div>
              <div class="slic"><div class="slab d-flex">ZONA<svg class="cv8"><use href="#chev"/></svg></div><div class="ssel d-flex justify-content-between">Todas<svg class="cv8 text-white"><use href="#chev"/></svg></div></div>
              <div class="slic"><div class="slab d-flex">TIPO<svg class="cv8"><use href="#chev"/></svg></div><div class="ssel d-flex justify-content-between">Todas<svg class="cv8 text-white"><use href="#chev"/></svg></div></div>
            </div>
            <div class="dates d-flex"><div class="dbox">07/05/2003</div><div class="dbox">08/04/2021</div></div>
            <div class="slider"><div class="ln"></div><div class="hd h1"></div><div class="hd h2"></div></div>
          </div>
        </div>

        <div class="r1 d-flex">
          <svg class="piebox" width="504" height="143" viewBox="30 198 504 143">
            <circle cx="182" cy="269.500" r="53" fill="#118dff"/>
            <path d="M182 269.500V216.500A53 53 0 00131.700 286.300z" fill="#12239e"/>
            <path d="M126 235h4l3 2" fill="none" stroke="#bbb"/>
            <path d="M226 302l3 2h7" fill="none" stroke="#bbb"/>
            <text class="pct" x="78" y="238">154 (30.14%)</text>
            <text class="pct" x="240" y="307">357 (69.86%)</text>
            <circle cx="321.500" cy="261.500" r="3" fill="#118dff"/>
            <circle cx="321.500" cy="278" r="3" fill="#12239e"/>
            <text class="pleg" x="329" y="265">PROSPECTOS</text>
            <text class="pleg" x="329" y="281.500">PROSPECTOS CONVERTI...</text>
          </svg>
          <div class="kpi k144 ktop"><div class="kt">Dias promedio de<br>conversion</div><div class="kv">777.13</div></div>
          <div class="kpi k158 ktop"><div class="kt">Dias promedio<br>Primer Seguimiento</div><div class="kv">623.79</div></div>
        </div>

        <div class="r2 d-flex">
          <div class="kpi k120"><div class="kt">Prospectos<br>registrados</div><div class="kv">511</div></div>
          <div class="kpi k143"><div class="kt">Prospectos<br>Convertidos</div><div class="kv">154</div></div>
          <div class="kpi k178"><div class="kt">Total prospectos sin<br>seguimiento</div><div class="kv">278</div></div>
        </div>

        <div class="tblw">
          <div class="hrow">
          <table class="table ttab">
            <colgroup><col class="c1"><col class="c2"><col class="c3"><col class="c4"><col class="c5"><col class="c6"><col class="c7"><col class="c8"><col class="c9"></colgroup>
            <thead><tr><th></th><th>ZONA</th><th>ORIGEN</th><th>UTM URL</th><th>FECHA CREACION</th><th>FECHA CONVERSION</th><th>ULTIMO SEGUIMIENTO</th><th>DIAS DE CONVERSION</th><th>DIAS ULTIMO SEGUMIENTO</th></tr></thead>
          </table>
          </div>
          <div class="tbody">
          <table class="table ttab">
            <colgroup><col class="c1"><col class="c2"><col class="c3"><col class="c4"><col class="c5"><col class="c6"><col class="c7"><col class="c8"><col class="c9"></colgroup>
            <tbody>
              <tr><td>cer</td><td>ZONA NORTE</td><td>Página WEB</td><td></td><td>lunes, 01 de enero de 2018</td><td>viernes, 22 de enero de 2021</td><td>martes, 26 de enero de 2021</td><td class="ar">1117</td><td class="ar">112</td></tr>
              <tr class="gy"><td>cer</td><td>ZONA SUR</td><td>Página WEB</td><td></td><td>lunes, 01 de enero de 2018</td><td>viernes, 22 de enero de 2021</td><td>martes, 26 de enero de 2021</td><td class="ar">1117</td><td class="ar">112</td></tr>
              <tr><td></td><td>ZONA NORTE</td><td>Página WEB</td><td></td><td>lunes, 01 de enero de 2018</td><td>viernes, 25 de septiembre de 2020</td><td>jueves, 12 de septiembre de 2019</td><td class="ar">998</td><td class="ar">61</td></tr>
              <tr class="gy"><td></td><td>ZONA SUR</td><td>Página WEB</td><td></td><td>lunes, 01 de enero de 2018</td><td>viernes, 25 de septiembre de 2020</td><td>jueves, 12 de septiembre de 2019</td><td class="ar">998</td><td class="ar">61</td></tr>
              <tr><td></td><td>ZONA NORTE</td><td>Otro</td><td></td><td>lunes, 01 de enero de 2018</td><td>lunes. 22 de febrero de 2021</td><td></td><td class="ar">1148</td><td class="ar"></td></tr>
              <tr class="gy"><td>cer</td><td>ZONA NORTE</td><td>Página WEB</td><td></td><td>lunes, 01 de enero de 2018</td><td>miércoles, 18 de noviembre de 2020</td><td>jueves, 04 de julio de 2019</td><td class="ar">1052</td><td class="ar">54</td></tr>
              <tr><td>cer</td><td>ZONA SUR</td><td>Página WEB</td><td></td><td>lunes, 01 de enero de 2018</td><td>miércoles, 18 de noviembre de 2020</td><td>jueves, 04 de julio de 2019</td><td class="ar">1052</td><td class="ar">54</td></tr>
              <tr class="gy"><td>cer</td><td>ZONA NORTE</td><td>Página WEB</td><td></td><td>lunes, 01 de enero de 2018</td><td>miércoles, 18 de diciembre de 2019</td><td>miércoles, 18 de diciembre de 2019</td><td class="ar">716</td><td class="ar">71</td></tr>
              <tr><td>cer</td><td>ZONA SUR</td><td>Página WEB</td><td></td><td>lunes, 01 de enero de 2018</td><td>miércoles, 18 de diciembre de 2019</td><td>miércoles, 18 de diciembre de 2019</td><td class="ar">716</td><td class="ar">71</td></tr>
            </tbody>
          </table>
          </div>
          <div class="hbar"><i></i><span class="hl">‹</span><span class="hr">›</span></div>
          <div class="vbar"><i></i></div>
          <svg class="cv8 vup"><use href="#chevu"/></svg><svg class="cv8 vdn"><use href="#chev"/></svg>
        </div>
        <div class="cbot"></div>
      </section>
      <aside class="filt d-flex flex-column align-items-center">
        <svg class="ic s12"><use href="#dbll"/></svg>
        <svg class="ic s12 fun" viewBox="0 0 12 12"><path d="M11 1L4 5 1 6l3 1 7 4z" fill="none" stroke="#252423"/><path d="M4 5v2" stroke="#252423"/></svg>
        <span class="vt">Filtros</span>
      </aside>
    </div>
    <ul class="nav ptabs">
      <li class="pnav d-flex align-items-center">
        <svg width="5" height="7" viewBox="0 0 5 7"><path d="M5 0v7L0 3.500z" fill="#222"/></svg>
        <svg width="5" height="7" viewBox="0 0 5 7"><path d="M0 0v7l5-3.500z" fill="#c8c6c4"/></svg>
      </li>
      <li class="nav-item t35"><a class="nav-link clipd" href="#">LIDERS</a></li>
      <li class="nav-item t113"><a class="nav-link" href="#">VENTAS / EQUIPOS</a></li>
      <li class="nav-item t67"><a class="nav-link" href="#">VENTAS</a></li>
      <li class="nav-item t99"><a class="nav-link" href="#">SEGUIMIENTOS</a></li>
      <li class="nav-item t97"><a class="nav-link" href="#">COTIZACIONES</a></li>
      <li class="nav-item t105"><a class="nav-link" href="#">COTIZACIONES 2</a></li>
      <li class="nav-item t106"><a class="nav-link" href="#">COTIZACIONES 3</a></li>
      <li class="nav-item t89"><a class="nav-link" href="#">PROSPECTOS</a></li>
      <li class="nav-item t99"><a class="nav-link active" href="#">PROSPECTOS 2</a></li>
      <li class="padd">+</li>
    </ul>
  </div>

  <aside class="viz d-flex flex-column">
    <div class="vh d-flex align-items-center"><span class="phead">Visualizaciones</span><svg class="ic s12"><use href="#dbl"/></svg></div>
    <div class="vsub">Compilar visual</div>
    <div class="vbtns d-flex">
      <div class="vsel"><svg viewBox="0 0 18 18"><path d="M1 1h16M1 8.500h16" stroke="#484644"/><path d="M1 3h16v4.500H1zM1 10.500h16v5H1z" fill="#117865" stroke="#252423" stroke-dasharray="1 1" stroke-width=".7"/><path d="M1 5h16M1 13h16" stroke="#0c5b4c" stroke-dasharray="1 1" stroke-width=".7"/></svg></div>
      <div class="vtab2"><svg width="22" height="22"><use href="#brush"/></svg></div>
    </div>
    <div class="notch"></div>
    <div class="vgrid">
      <svg class="ic"><use href="#v1"/></svg><svg class="ic"><use href="#v2"/></svg><svg class="ic"><use href="#v3"/></svg><svg class="ic"><use href="#v4"/></svg><svg class="ic"><use href="#v5"/></svg><svg class="ic"><use href="#v6"/></svg>
      <svg class="ic"><use href="#v7"/></svg><svg class="ic"><use href="#v8"/></svg><svg class="ic"><use href="#v9"/></svg><svg class="ic"><use href="#v10"/></svg><svg class="ic"><use href="#v11"/></svg><svg class="ic"><use href="#v12"/></svg>
      <svg class="ic"><use href="#v13"/></svg><svg class="ic"><use href="#v14"/></svg><svg class="ic"><use href="#v15"/></svg><svg class="ic"><use href="#v16"/></svg><svg class="ic"><use href="#v17"/></svg><svg class="ic"><use href="#v18"/></svg>
      <svg class="ic"><use href="#v19"/></svg><svg class="ic"><use href="#v20"/></svg><svg class="ic"><use href="#v21"/></svg><svg class="ic"><use href="#v22"/></svg><svg class="ic"><use href="#v23"/></svg><svg class="ic"><use href="#v24"/></svg>
      <svg class="ic"><use href="#v25"/></svg><svg class="ic"><use href="#v26"/></svg><svg class="ic"><use href="#v27"/></svg><span class="rr">R</span><span class="rr">Py</span><svg class="ic"><use href="#v30"/></svg>
      <svg class="ic"><use href="#v31"/></svg><svg class="ic"><use href="#v32"/></svg><svg class="ic"><use href="#v33"/></svg><svg class="ic"><use href="#v34"/></svg><svg class="ic"><use href="#v35"/></svg><svg class="ic"><use href="#v36"/></svg>
      <svg class="ic"><use href="#v37"/></svg><svg class="ic"><use href="#v38"/></svg><span class="dots">···</span>
    </div>
    <div class="vsec">
      <div class="vlab">Valores</div>
      <div class="vbox">Agregar campos de datos a...</div>
      <div class="vlab mt8">Obtener detalles</div>
      <div class="trow d-flex"><span>Entre varios informes</span><span class="togl"></span></div>
      <div class="trow t2 d-flex"><span class="wr">Mantener todos los filtros</span><span class="togl on"><svg width="8" height="8" viewBox="0 0 8 8"><path d="M1 4l2 2 4-4" fill="none" stroke="#fff" stroke-width="1.300"/></svg></span></div>
      <div class="vbox b2">Agregue los campos de ob...</div>
    </div>
  </aside>

  <aside class="data d-flex flex-column">
    <div class="dh d-flex align-items-center"><span class="phead">Datos</span><svg class="ic s12"><use href="#dbl"/></svg></div>
    <div class="dsearch d-flex align-items-center"><svg class="ic s12" viewBox="0 0 12 12"><circle cx="7.500" cy="4.500" r="3.500" fill="none" stroke="#484644"/><path d="M5 7l-4 4" stroke="#c8873a" stroke-width="1.200"/></svg>Buscar</div>
    <ul class="list-group list-group-flush dlist">
      <li class="list-group-item"><svg width="7" height="12"><use href="#right"/></svg><svg width="12" height="10"><use href="#tabi"/></svg>ACCIONES_TAREAS</li>
      <li class="list-group-item"><svg width="7" height="12"><use href="#right"/></svg><svg width="12" height="10"><use href="#tabi"/></svg>ARTICULOS</li>
      <li class="list-group-item"><svg width="7" height="12"><use href="#right"/></svg><svg width="12" height="10"><use href="#tabi"/></svg>ARTICULOS (2)</li>
      <li class="list-group-item"><svg width="7" height="12"><use href="#right"/></svg><svg width="12" height="10"><use href="#tabi"/></svg>CALIFICACION_ACCIONES</li>
      <li class="list-group-item"><svg width="7" height="12"><use href="#right"/></svg><svg width="12" height="10"><use href="#tabi"/></svg>CIUDADES</li>
      <li class="list-group-item"><svg width="7" height="12"><use href="#right"/></svg><svg width="12" height="10"><use href="#tabi"/></svg>CLIE01</li>
      <li class="list-group-item"><svg width="7" height="12"><use href="#right"/></svg><svg width="12" height="10"><use href="#tabi"/></svg>CLIENTES</li>
      <li class="list-group-item"><svg width="7" height="12"><use href="#right"/></svg><svg width="12" height="10"><use href="#tabi"/></svg>CLIENTES PROSPECTO</li>
      <li class="list-group-item"><svg width="7" height="12"><use href="#right"/></svg><svg width="12" height="10"><use href="#tabi"/></svg>CLIENTES_COMPLEMENTOS</li>
      <li class="list-group-item"><svg width="7" height="12"><use href="#right"/></svg><svg width="12" height="10"><use href="#tabi"/></svg>CONDICIONES_PAGO</li>
      <li class="list-group-item"><svg width="7" height="12"><use href="#right"/></svg><svg width="12" height="10"><use href="#tabi"/></svg>CONTACTO_CONTACTOS</li>
      <li class="list-group-item"><svg width="7" height="12"><use href="#right"/></svg><svg width="12" height="10"><use href="#tabi"/></svg>DCDOCTOS_PDV</li>
      <li class="list-group-item"><svg width="7" height="12"><use href="#right"/></svg><svg width="12" height="10"><use href="#tabi"/></svg>DCDOCTOS_PDV_DET</li>
      <li class="list-group-item"><svg width="7" height="12"><use href="#right"/></svg><svg width="12" height="10"><use href="#tabi"/></svg>DIRS_CLIENTES</li>
      <li class="list-group-item"><svg width="7" height="12"><use href="#right"/></svg><svg width="12" height="10"><use href="#tabi"/></svg>DOCTOS_LIGADOS_PROYECTOS</li>
      <li class="list-group-item"><svg width="7" height="12"><use href="#right"/></svg><svg width="12" height="10"><use href="#tabi"/></svg>ESTADOS</li>
      <li class="list-group-item"><svg width="7" height="12"><use href="#right"/></svg><svg width="12" height="10"><use href="#tabi"/></svg>ESTATUS_TAREAS</li>
      <li class="list-group-item"><svg width="7" height="12"><use href="#right"/></svg><svg width="12" height="10"><use href="#tabi"/></svg>ESTATUS_TAREAS_TRACKING</li>
      <li class="list-group-item"><svg width="7" height="12"><use href="#right"/></svg><svg width="12" height="10"><use href="#tabi"/></svg>FACTF01</li>
      <li class="list-group-item"><svg width="7" height="12"><use href="#right"/></svg><svg width="12" height="10"><use href="#tabi"/></svg>GIROS</li>
      <li class="list-group-item"><svg width="7" height="12"><use href="#right"/></svg><svg width="12" height="10"><use href="#tabi"/></svg>INVENTARIOS</li>
      <li class="list-group-item"><svg width="7" height="12"><use href="#right"/></svg><svg width="12" height="10"><use href="#tabi"/></svg>INVENTARIOS_CLIENTES</li>
      <li class="list-group-item"><svg width="7" height="12"><use href="#right"/></svg><svg width="12" height="10"><use href="#tabi"/></svg>LIBRES_DOCTOS</li>
      <li class="list-group-item"><svg width="7" height="12"><use href="#right"/></svg><svg width="12" height="10"><use href="#tabi"/></svg>LIBRES_INVENTARIOS</li>
      <li class="list-group-item"><svg width="7" height="12"><use href="#right"/></svg><svg width="12" height="10"><use href="#tabi"/></svg>LIBRES_PROYECTOS_4</li>
    </ul>
    <div class="dscroll"></div>
  </aside>
  <div class="redbox"></div>
</div>

<footer class="stat d-flex align-items-center">
  <span>Página 11 de 11</span>
  <div class="zoomz d-flex align-items-center">
    <span>-</span><span class="ztrack"></span><span class="fs-6 lh-1">+</span><span class="zpct">82 %</span>
    <svg class="ic s14" viewBox="0 0 14 14"><path d="M1.500 2.500h11v9h-11z" fill="#fff" stroke="#8a8886"/><path d="M3 5V4h2M9 4h2v1M11 9v1H9M5 10H3V9" fill="none" stroke="#484644" stroke-width=".8"/></svg>
  </div>
</footer>
<script src="https://cdn.jsdelivr.net/npm/bootstrap@5.3.0/dist/js/bootstrap.bundle.min.js"></script>
</body>
</html>
